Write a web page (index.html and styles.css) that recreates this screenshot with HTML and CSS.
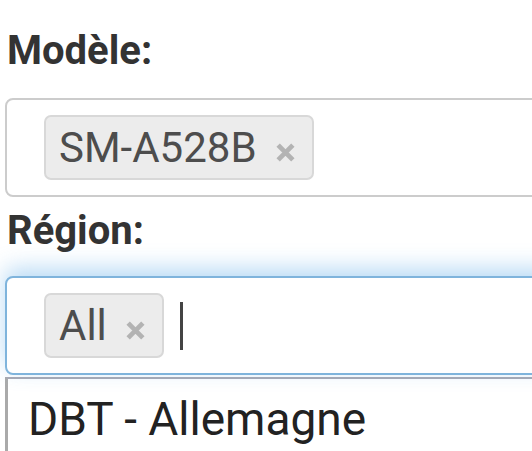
FILE: index.html
```html
<!DOCTYPE html>
<html lang="fr">
<head>
    <meta charset="UTF-8">
    <meta name="viewport" content="width=device-width, initial-scale=1.0">
    <title>Recherche firmware</title>
    <link rel="stylesheet" href="styles.css">
</head>
<body>
    <div class="formulaire">
        <label class="champ-label">Modèle:</label>
        <div class="selecteur">
            <span class="choix">SM-A528B
                <svg class="retirer" viewBox="0 0 20 18"><path d="M3 2 L17 16 M17 2 L3 16"/></svg>
            </span>
        </div>

        <label class="champ-label">Région:</label>
        <div class="zone-region">
            <div class="selecteur actif">
                <span class="choix">All
                    <svg class="retirer" viewBox="0 0 20 18"><path d="M3 2 L17 16 M17 2 L3 16"/></svg>
                </span>
                <span class="curseur"></span>
            </div>
            <ul class="resultats">
                <li>DBT - Allemagne</li>
            </ul>
        </div>
    </div>
</body>
</html>
```

FILE: styles.css
```css
body {
    font-family: Roboto, "Noto Sans", Arial, sans-serif;
    background-color: #fff;
    margin: 0;
    padding: 0;
    overflow: hidden;
}

.formulaire {
    padding: 28px 0 0 5px;
    width: 560px;
}

.champ-label {
    display: block;
    font-size: 40px;
    font-weight: bold;
    line-height: 46px;
    color: #333;
    margin: 0 0 24px 2px;
}

.selecteur {
    display: flex;
    align-items: center;
    height: 95px;
    padding: 0 0 0 37px;
    border: 2px solid #ccc;
    border-radius: 8px;
    background-color: #fff;
    margin-bottom: 11px;
}

.choix {
    display: flex;
    align-items: center;
    height: 61px;
    padding: 0 16px 0 13px;
    font-size: 42px;
    color: #4d4d4d;
    background-color: #ececec;
    border: 2px solid #d8d8d8;
    border-radius: 7px;
}

.retirer {
    width: 21px;
    height: 19px;
    margin: 10px 0 0 18px;
    fill: none;
    stroke: #b3b3b3;
    stroke-width: 4.5;
}

.curseur {
    display: inline-block;
    width: 3px;
    height: 48px;
    margin-left: 16px;
    background-color: #444;
}

.zone-region {
    margin-top: -2px;
}

.zone-region .selecteur {
    margin-bottom: 0;
}

.selecteur.actif {
    border-color: #7fb4dc;
    box-shadow: 0 -8px 22px rgba(102, 175, 233, 0.45);
    position: relative;
}

.resultats {
    list-style: none;
    margin: 2px 0 0;
    padding: 0;
    border-top: 2px solid #a9a9b3;
    border-left: 3px solid #aaa;
    height: 80px;
}

.resultats li {
    font-size: 46px;
    line-height: 54px;
    color: #222;
    padding: 13px 0 0 20px;
}
```
